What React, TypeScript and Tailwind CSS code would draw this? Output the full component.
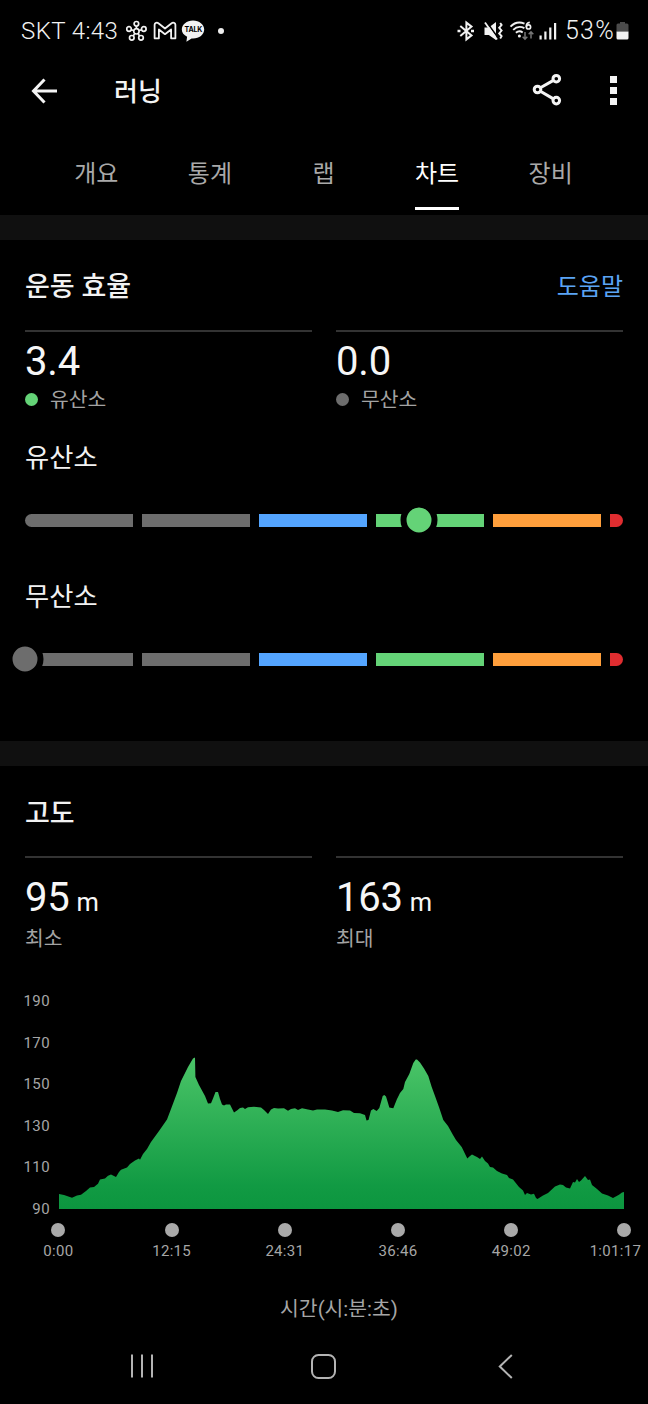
import { clsx } from 'clsx';

type Tab = { label: string; active?: boolean };
type Stat = { value: string; unit?: string; label: string; dot?: string };

const TABS: Tab[] = [
  { label: '개요' },
  { label: '통계' },
  { label: '랩' },
  { label: '차트', active: true },
  { label: '장비' },
];

const ZONES = [
  'w-[108px] bg-[#6d6d6d]',
  'w-[108px] bg-[#6d6d6d]',
  'w-[108px] bg-[#54a5ff]',
  'w-[108px] bg-[#64d377]',
  'w-[108px] bg-[#ff9f3c]',
  'w-[13px] bg-[#e02d30]',
];

const Y_TICKS = [190, 170, 150, 130, 110, 90];
const X_TICKS = ['0:00', '12:15', '24:31', '36:46', '49:02', '1:01:17'];

// x, y pairs inside a 565x160 plot, baseline at y=159
const ELEVATION = [
  [0, 144], [5, 145], [13, 147.8], [18, 145.5], [22, 144.8], [27, 141], [31, 137.6], [35, 137], [39, 133.8],
  [41, 129.4], [46, 128.4], [49, 125.8], [52, 124.4], [57, 127], [60, 122], [62, 119.8], [68, 117.6], [71, 114],
  [76, 110.6], [80, 108.4], [81, 109.8], [84, 104], [88, 99], [92, 92], [100, 81], [108, 69.5], [112, 59],
  [118, 43], [122, 31], [129, 17], [134, 8.5], [136, 7.4], [136.4, 27], [140, 35], [146, 46], [149, 53.4],
  [152, 53.2], [154, 48.5], [156.5, 42], [159, 42], [161, 49], [163, 54.6], [165, 55.6], [167, 54.4], [171, 54.6],
  [175, 62.4], [178, 60.6], [181, 58], [184, 57.6], [186, 59], [189, 57.2], [195, 56.8], [202, 57.4], [205, 60],
  [209, 64], [212, 59.6], [215, 58], [219, 58.6], [225, 58.2], [229, 60.8], [232, 59], [236, 58.2], [239, 60],
  [243, 58.2], [249, 59.6], [254, 60.6], [258, 59.4], [266, 59.4], [273, 60.6], [279, 62], [284, 60.2], [291, 60.4],
  [295, 63], [301, 63.2], [306, 65], [307.5, 70.6], [309.5, 70], [312, 60.4], [314.3, 59], [317.7, 61], [320.3, 58],
  [322.3, 51], [323.7, 46], [325.3, 45], [327, 46.5], [329, 53], [330.3, 57.5], [332.7, 58], [334.3, 58.3],
  [338, 49], [341, 43], [344.3, 39], [346, 32], [350.3, 24], [354.3, 13], [356.7, 9.6], [358, 9.4], [361, 12.6],
  [365, 18.5], [369.3, 26], [372.7, 37], [376, 46], [380.3, 58],
  [384.3, 70], [389, 76], [394, 85], [397, 90], [402.7, 97], [408.3, 108.6], [411, 106], [413, 104.4], [418, 107],
  [421, 109], [423, 106.6], [426, 111], [429, 113.4], [431, 117], [434, 117.4], [438, 121], [443, 123.4],
  [448, 125], [450, 128], [454, 129.4], [460, 137], [464, 140.6], [466, 145], [468, 143], [472, 144.6], [475, 143.8],
  [477, 148], [478.5, 149], [484, 145.6], [489, 143], [496, 136.4], [501, 134.6], [504, 135], [507, 137.4],
  [511, 138.6], [514, 132], [516, 132.6], [518, 129], [520, 132], [522, 130.6], [526, 126], [529, 130], [531, 129.6],
  [533, 135], [538, 139], [543, 143.4], [549, 145.4], [554, 148], [560, 144.8], [563, 142.4], [565, 142],
];

const StatusBar = () => (
  <div className="flex h-[62px] items-center justify-between pr-[19px] pl-[21px] text-[#f2f2f2]">
    <div className="flex items-center">
      <span className="text-[24px] leading-[62px] font-[350] tracking-[0.4px]">SKT 4:43</span>
      <svg className="ml-[8px]" width="21" height="22" viewBox="0 0 21 22" fill="none" stroke="currentColor" strokeWidth="1.7">
        <circle cx="10.4" cy="11.3" r="2.7" />
        <circle cx="10.4" cy="3.8" r="2.3" />
        <circle cx="3" cy="9" r="2.3" />
        <circle cx="17.8" cy="9" r="2.3" />
        <circle cx="5.8" cy="17.8" r="2.3" />
        <circle cx="15" cy="17.8" r="2.3" />
        <path d="M10.4 6v2.5M5.1 9.7l2.6.8M15.7 9.7l-2.6.8M7.2 16l1.5-2.4M13.6 16l-1.5-2.4" />
      </svg>
      <svg className="ml-[6px]" width="24" height="20" viewBox="0 0 24 20" fill="none" stroke="currentColor" strokeWidth="1.8" strokeLinejoin="round">
        <path d="M1.6 3.8C1.6 1.8 4 1 5.4 2.2L12 7.5l6.6-5.3c1.4-1.2 3.8-.4 3.8 1.6v13.5h-4.3V8.5L12 13.2 5.9 8.5v8.8H1.6z" />
      </svg>
      <span className="relative ml-[4px] flex h-[22px] w-[24px] justify-center">
        <svg className="absolute inset-0" width="24" height="22" viewBox="0 0 24 22" fill="currentColor">
          <path d="M12 .5c6.3 0 11.2 4 11.2 9s-4.9 9-11.2 9l-1.4-.1-5.2 3.3.7-5C2.8 15.2.8 12.5.8 9.5c0-5 4.9-9 11.2-9z" />
        </svg>
        <span className="relative font-['Inter'] text-[7px] leading-[20px] font-bold tracking-[-0.2px] text-black">TALK</span>
      </span>
      <span className="ml-[13px] size-[6px] rounded-full bg-[#ededed]" />
    </div>
    <div className="flex items-center">
      <svg width="18" height="22" viewBox="0 0 18 22" fill="none" stroke="currentColor" strokeWidth="2">
        <path d="M3.3 6l11.200 9.400L9.400 19.400V2.600l5.100 4L3.300 16" />
        <path d="M.5 11h3M14 11h3" strokeWidth="2.400" />
      </svg>
      <svg className="ml-[8px]" width="20" height="22" viewBox="0 0 20 22" fill="none" stroke="currentColor">
        <path d="M1.500 7.500h4.300L13 2v18l-7.200-5H1.500z" fill="currentColor" stroke="none" />
        <path d="M3.300 1.500l12 16.800" stroke="#000" strokeWidth="1.600" />
        <path d="M2 2.500l12 17" strokeWidth="1.800" />
        <path d="M17.200 3l1.400 2-2.400 2.800 2.400 2.800-2.400 2.800 2.400 2.800-1.400 2.300" strokeWidth="1.900" />
      </svg>
      <svg className="ml-[6px]" width="26" height="22" viewBox="0 0 26 22" fill="none" stroke="currentColor" strokeWidth="1.900">
        <path d="M1.500 6.700C5.200 2.800 10.700 1.800 15.500 3.600M4.200 9.800c3-3 7.300-3.600 11.200-1.700M6.900 12.800c2-1.800 4.800-1.900 6.800-.4" />
        <circle cx="10.400" cy="15.900" r="1.500" fill="currentColor" stroke="none" />
        <path d="M20.800 2.400c-1.900.2-3.500 2-3.500 4.400" strokeWidth="1.700" />
        <circle cx="19.500" cy="6.900" r="2.100" strokeWidth="1.700" />
        <path d="M16 12v7M13.700 16.800l2.300 2.400 2.300-2.400M22 18.500v-6.500M19.700 14.200l2.300-2.400 2.300 2.400" stroke="#777" strokeWidth="1.500" />
      </svg>
      <svg className="ml-[4px]" width="18" height="20" viewBox="0 0 18 20" fill="currentColor">
        <rect x="0.500" y="14.500" width="2.200" height="4" />
        <rect x="5.300" y="10.500" width="2.200" height="8" />
        <rect x="10.200" y="6.500" width="2.200" height="12" />
        <rect x="15" y="2" width="2.200" height="16.500" />
      </svg>
      <span className="ml-[8px] text-[25px] leading-[62px] font-[350] tracking-[1.3px]">53%</span>
      <svg className="ml-[1px]" width="13" height="20" viewBox="0 0 13 20">
        <path d="M4 1h5v1.500H11a1.500 1.500 0 0 1 1.500 1.500V10.500H.5V4A1.500 1.500 0 0 1 2 2.500h2z" fill="#4b4b4b" />
        <path d="M.5 10.500h12V17a1.500 1.500 0 0 1-1.500 1.500H2A1.500 1.500 0 0 1 .5 17z" fill="#f2f2f2" />
      </svg>
    </div>
  </div>
);

const Header = () => (
  <header className="flex h-[59px] items-center pr-[31px] pb-[2px] pl-[31px] text-[#f4f4f4]">
    <svg width="27" height="26" viewBox="0 0 27 26" fill="none" stroke="currentColor" strokeWidth="3">
      <path d="M13.500 1.500L2.500 13l11 11.500M2.500 13H26" />
    </svg>
    <h1 className="mt-[2px] ml-[56px] text-[26px] leading-[50px] font-medium">러닝</h1>
    <svg className="mb-[2px] ml-auto" width="30" height="34" viewBox="0 0 30 34" fill="none" stroke="currentColor" strokeWidth="3">
      <circle cx="5.500" cy="16.500" r="3.300" />
      <circle cx="24.300" cy="5.700" r="3.300" />
      <circle cx="24.300" cy="27.600" r="3.300" />
      <path d="M8.400 14.800l13-7.400M8.400 18.200l13 7.700" />
    </svg>
    <div className="ml-[48px] flex flex-col gap-[4px]">
      {[0, 1, 2].map(i => <span key={i} className="size-[7px] bg-[#f4f4f4]" />)}
    </div>
  </header>
);

const Divider = () => <div className="h-[25px] bg-[#101010]" />;

const StatCell = ({ value, unit, label, dot }: Stat) => (
  <div className="w-[287px] border-t-2 border-[#333333]">
    <div className={clsx('text-[40px] leading-[47px] tracking-[-0.2px] text-[#f6f6f6]', dot ? 'pt-[6px]' : 'pt-[16px]')}>
      {value}
      {unit && <span className="ml-[7px] text-[25.500px]">{unit}</span>}
    </div>
    <div className={clsx('flex h-[30px] items-center text-[20.400px] leading-[30px] text-[#a3a3a3]', !dot && '-mt-[2px]')}>
      {dot && <span className={clsx('mr-[12px] mb-[2px] size-[13px] rounded-full', dot)} />}
      {label}
    </div>
  </div>
);

const ZoneBar = ({ offset, color }: { offset: number; color: string }) => (
  <div className="relative flex gap-[9px]">
    {ZONES.map((zone, i) => (
      <span key={i} className={clsx('h-[13px]', zone, i === 0 && 'rounded-l-full', i === ZONES.length - 1 && 'rounded-r-full')} />
    ))}
    <span
      className={clsx('absolute top-[6px] box-content size-[25px] -translate-1/2 rounded-full border-[6px] border-black', color)}
      style={{ left: offset }}
    />
  </div>
);

const ElevationChart = () => {
  const line = ELEVATION.map(([x, y]) => `L${x} ${y}`).join('');

  return (
    <div className="mt-[36px]">
      <div className="flex">
        <div className="flex w-[50px] flex-col items-end text-[15px] tracking-[0.4px] text-[#a6a6a6]">
          {Y_TICKS.map(tick => <span key={tick} className="h-[41.600px] leading-[22px]">{tick}</span>)}
        </div>
        <svg className="mt-[60px] ml-[9px]" width="565" height="160" viewBox="0 0 565 160">
          <defs>
            <linearGradient id="elevation" x1="0" y1="7" x2="0" y2="159" gradientUnits="userSpaceOnUse">
              <stop offset="0" stopColor="#4bc568" />
              <stop offset="0.850" stopColor="#119a43" />
              <stop offset="1" stopColor="#0c963f" />
            </linearGradient>
          </defs>
          <path d={`M0 159${line}L565 159Z`} fill="url(#elevation)" />
        </svg>
      </div>
      <div className="-mt-[17px] flex justify-between pr-[23.600px] pl-[58.400px] text-[15px] tracking-[0.300px] text-[#a6a6a6]">
        {X_TICKS.map((tick, i) => (
          <div key={tick} className="flex w-0 flex-col items-center">
            <span className="size-[14px] rounded-full bg-[#a9a9a9]" />
            {/* the last label is pulled in so it stays on screen */}
            <span className={clsx('mt-[4px] leading-[20px] whitespace-nowrap', i === X_TICKS.length - 1 && 'mr-[18px]')}>{tick}</span>
          </div>
        ))}
      </div>
      <p className="mt-[32px] pl-[30px] text-center text-[20.400px] leading-[32px] text-[#a6a6a6]">시간(시:분:초)</p>
    </div>
  );
};

const NavBar = () => (
  <nav className="mt-auto flex h-[76px] items-center pl-[130px] text-[#b4b4b4]">
    <svg width="24" height="24" viewBox="0 0 24 24" fill="none" stroke="currentColor" strokeWidth="2">
      <path d="M2 .5v23M12 .5v23M22 .5v23" />
    </svg>
    <svg className="ml-[157px]" width="25" height="25" viewBox="0 0 25 25" fill="none" stroke="currentColor" strokeWidth="2">
      <rect x="1" y="1" width="23" height="23" rx="6.500" />
    </svg>
    <svg className="ml-[162px]" width="15" height="25" viewBox="0 0 15 25" fill="none" stroke="currentColor" strokeWidth="2">
      <path d="M13.800 1L1.800 12.500l12 11.500" />
    </svg>
  </nav>
);

const App = () => {
  return (
    <div className="flex h-[1404px] w-[648px] flex-col overflow-hidden bg-black font-['Roboto','Noto_Sans_CJK_KR',sans-serif] text-[#f2f2f2]">
      <StatusBar />
      <Header />

      <div className="flex h-[94px] pt-[33px] pr-[40.500px] pl-[39.500px]">
        {TABS.map(tab => (
          <div key={tab.label} className="flex flex-1 justify-center">
            <span
              className={clsx(
                'h-[56px] border-b-3 text-[24px] leading-[40px]',
                tab.active ? 'border-white text-white' : 'border-transparent text-[#a9a9a9]',
              )}
            >
              {tab.label}
            </span>
          </div>
        ))}
      </div>

      <Divider />

      <section className="h-[501px] px-[25px] pt-[27px]">
        <div className="flex h-[40px] items-center justify-between">
          <h2 className="text-[27px] font-medium">운동 효율</h2>
          <span className="text-[24px] text-[#5ba4f5]">도움말</span>
        </div>
        <div className="mt-[23px] flex justify-between">
          <StatCell value="3.4" label="유산소" dot="bg-[#64d377]" />
          <StatCell value="0.0" label="무산소" dot="bg-[#6d6d6d]" />
        </div>
        <h3 className="mt-[23px] mb-[36px] text-[26.300px] leading-[40px]">유산소</h3>
        <ZoneBar offset={394} color="bg-[#64d377]" />
        <h3 className="mt-[50px] mb-[36px] text-[26.300px] leading-[40px]">무산소</h3>
        <ZoneBar offset={0} color="bg-[#6d6d6d]" />
      </section>

      <Divider />

      <section>
        <div className="px-[25px] pt-[28px]">
          <h2 className="text-[27px] leading-[40px] font-medium">고도</h2>
          <div className="mt-[22px] flex justify-between">
            <StatCell value="95" unit="m" label="최소" />
            <StatCell value="163" unit="m" label="최대" />
          </div>
        </div>
        <ElevationChart />
      </section>

      <NavBar />
    </div>
  );
};

export default App;
